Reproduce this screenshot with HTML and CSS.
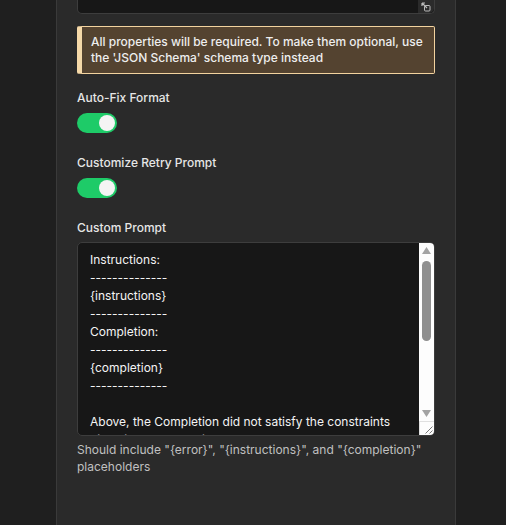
FILE: index.html
```html
<!DOCTYPE html>
<html>
<head>
<meta charset="utf-8">
<link rel="stylesheet" href="styles.css">
</head>
<body>
<div class="page">
  <div class="panel">
    <div class="prev-field"><span class="prev-corner"><svg width="10" height="10" viewBox="0 0 10 10"><path d="M1 1 L6 6 M1 1 L1 4 M1 1 L4 1" stroke="#bbb" stroke-width="1.2" fill="none"/><rect x="3.5" y="3.5" width="5.5" height="5.5" rx="1" stroke="#bbb" stroke-width="1" fill="none"/></svg></span></div>
    <div class="warning">All properties will be required. To make them optional, use the 'JSON Schema' schema type instead</div>
    <div class="field">
      <div class="label">Auto-Fix Format</div>
      <div class="toggle"><span class="knob"></span></div>
    </div>
    <div class="field">
      <div class="label">Customize Retry Prompt</div>
      <div class="toggle"><span class="knob"></span></div>
    </div>
    <div class="field">
      <div class="label label-tight">Custom Prompt</div>
      <div class="prompt-box">
        <div class="prompt-text">Instructions:
--------------
{instructions}
--------------
Completion:
--------------
{completion}
--------------

Above, the Completion did not satisfy the constraints given in the Instructions.
Error:
--------------
{error}
--------------</div>
        <div class="scrollbar">
          <div class="sb-btn"><svg width="9" height="7" viewBox="0 0 9 7"><path d="M0 7 L4.5 0 L9 7 Z" fill="#a3a3a3"/></svg></div>
          <div class="sb-track"><div class="sb-thumb"></div></div>
          <div class="sb-btn sb-down"><svg width="9" height="7" viewBox="0 0 9 7"><path d="M0 0 L4.5 7 L9 0 Z" fill="#a3a3a3"/></svg></div>
          <div class="sb-resizer"><svg width="14" height="14" viewBox="0 0 14 14"><path d="M12.5 5.5 L5.5 12.5 M12.5 9.5 L9.5 12.5" stroke="#7a7a7a" stroke-width="1"/></svg></div>
        </div>
      </div>
      <div class="help">Should include "{error}", "{instructions}", and "{completion}" placeholders</div>
    </div>
  </div>
</div>
</body>
</html>
```

FILE: styles.css
```css
html, body {
  margin: 0;
  padding: 0;
  background: #1f1f1f;
  height: 100%;
  overflow: hidden;
}
.page {
  display: flex;
  justify-content: flex-start;
  height: 100%;
  font-family: Inter, "Noto Sans", sans-serif;
  font-size: 12px;
  color: #e6e6e6;
}
.panel {
  margin-left: 56px;
  width: 358px;
  background: #2a2a2a;
  border-left: 1px solid #3a3a3a;
  border-right: 1px solid #3a3a3a;
  padding: 0 20px;
  display: flex;
  flex-direction: column;
}
.prev-field {
  height: 13px;
  background: #171717;
  border: 1px solid #3d3d3d;
  border-top: none;
  border-radius: 0 0 5px 5px;
  display: flex;
  justify-content: flex-end;
}
.prev-corner {
  width: 16px;
  height: 13px;
  background: #2b2b2b;
  display: flex;
  align-items: center;
  justify-content: center;
  border-bottom-right-radius: 5px;
}
.warning {
  margin-top: 12px;
  background: #544330;
  border: 1px solid #f3d39f;
  border-left: 5px solid #f5d9a8;
  border-radius: 2px;
  padding: 7px 10px 7px 9px;
  line-height: 16px;
  color: #eeeeee;
  font-weight: 500;
}
.field {
  display: flex;
  flex-direction: column;
  margin-top: 16px;
}
.field + .field {
  margin-top: 22px;
}
.label {
  font-weight: 500;
  line-height: 16px;
  color: #e6e6e6;
  margin-bottom: 7px;
}
.label-tight {
  margin-bottom: 6px;
}
.toggle {
  width: 40px;
  height: 20px;
  border-radius: 10px;
  background: #1ecb68;
  display: flex;
  align-items: center;
  justify-content: flex-end;
  padding: 0 2px;
  box-sizing: border-box;
}
.knob {
  width: 16px;
  height: 16px;
  border-radius: 50%;
  background: #f4f4f4;
}
.prompt-box {
  display: flex;
  height: 194px;
  box-sizing: border-box;
  background: #171717;
  border: 1px solid #3d3d3d;
  border-radius: 5px;
  overflow: hidden;
}
.prompt-text {
  flex: 1;
  padding: 8px 12px;
  white-space: pre-wrap;
  overflow: hidden;
  color: #f4f4f4;
  line-height: 18px;
  font-weight: 400;
}
.scrollbar {
  width: 15px;
  background: #fdfdfd;
  display: flex;
  flex-direction: column;
}
.sb-btn {
  height: 15px;
  display: flex;
  align-items: center;
  justify-content: center;
}
.sb-track {
  flex: 1;
  padding: 3px;
}
.sb-thumb {
  height: 80px;
  width: 9px;
  border-radius: 5px;
  background: #8f8f8f;
}
.sb-resizer {
  height: 14px;
  border-top: 1px solid #e0e0e0;
  border-left: 1px solid #e0e0e0;
  box-sizing: border-box;
  display: flex;
  align-items: flex-end;
  justify-content: flex-end;
}
.help {
  margin-top: 5px;
  line-height: 17px;
  color: #c0c0c0;
  font-weight: 400;
}
```
